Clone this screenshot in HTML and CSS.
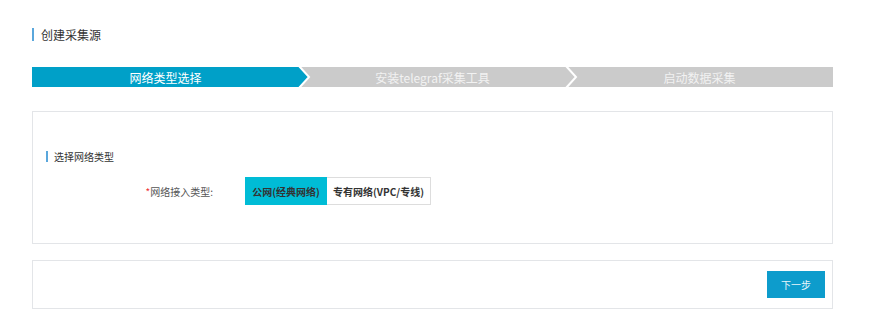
FILE: index.html
```html
<!DOCTYPE html>
<html lang="zh-CN">
<head>
  <meta charset="UTF-8" />
  <title>创建采集源</title>
  <link rel="stylesheet" href="styles.css">
</head>
<body>
  <div class="page">
    <!-- Title -->
    <div class="page-title">创建采集源</div>

    <!-- Steps -->
    <div class="steps">
      <div class="step active">
        <span>网络类型选择</span>
        <svg class="chevron" width="14" height="20" viewBox="0 0 14 20">
          <polygon points="0,0 2,0 12,10 2,20 0,20" fill="#00a0c8" />
          <polyline points="2,-1 12,10 2,21" fill="none" stroke="#fff" stroke-width="2" />
        </svg>
      </div>
      <div class="step">
        <span>安装telegraf采集工具</span>
        <svg class="chevron" width="14" height="20" viewBox="0 0 14 20">
          <polyline points="2,-1 12,10 2,21" fill="none" stroke="#fff" stroke-width="2" />
        </svg>
      </div>
      <div class="step">
        <span>启动数据采集</span>
      </div>
    </div>

    <!-- Network type -->
    <div class="panel panel-form">
      <div class="section-title">选择网络类型</div>
      <div class="form-row">
        <label class="form-label"><i>*</i>网络接入类型:</label>
        <div class="btn-group">
          <button class="opt selected">公网(经典网络)</button>
          <button class="opt">专有网络(VPC/专线)</button>
        </div>
      </div>
    </div>

    <!-- Footer -->
    <div class="panel panel-foot">
      <button class="btn-next">下一步</button>
    </div>
  </div>
</body>
</html>
```

FILE: styles.css
```css
/* Reset & Body */
* { box-sizing: border-box; margin: 0; padding: 0; }
html, body { width: 100%; height: 100%; background: #fff; }
body { font-family: "Noto Sans CJK SC", "Liberation Sans", sans-serif; color: #333; overflow: hidden; }

.page { width: 801px; margin-left: 32px; padding-top: 28px; }

/* Title */
.page-title {
  border-left: 2px solid #5aa7dc;
  padding-left: 7px;
  font-size: 12px;
  line-height: 13px;
  height: 13px;
  color: #333;
}

/* Steps */
.steps { display: flex; height: 20px; margin-top: 26px; background: #cbcbcb; }
.step {
  position: relative;
  flex: 1;
  display: flex; align-items: center; justify-content: center;
  font-size: 12px;
  color: #f2f2f2;
}
.step.active { background: #00a0c8; color: #fff; }
.chevron { position: absolute; top: 0; right: -12px; z-index: 1; overflow: visible; }

/* Panels */
.panel { border: 1px solid #e3e5e8; background: #fff; }
.panel-form { margin-top: 24px; height: 133px; padding: 39px 0 0 13px; }
.panel-foot { margin-top: 16px; height: 49px; display: flex; justify-content: flex-end; align-items: center; padding-right: 7px; }

.section-title {
  border-left: 2px solid #5aa7dc;
  padding-left: 6px;
  font-size: 10px;
  line-height: 11px;
  height: 11px;
  color: #333;
}

.form-row { display: flex; align-items: center; margin-top: 15px; }
.form-label {
  width: 199px;
  text-align: right;
  font-size: 10px;
  color: #555;
  padding-right: 32px;
}
.form-label i { font-style: normal; color: #e33; }

.btn-group { display: flex; }
.opt {
  height: 28px;
  border: 1px solid #ddd;
  background: #fff;
  font-family: inherit;
  font-size: 10px;
  font-weight: bold;
  color: #333;
  padding: 0 6px;
}
.opt.selected { width: 82px; background: #00bcd6; border-color: #00bcd6; }
.opt + .opt { border-left: none; width: 104px; }

.btn-next {
  width: 58px; height: 27px;
  border: none;
  background: #0d9ccc;
  color: #e8f6fb;
  font-family: inherit;
  font-size: 10px;
}
```
